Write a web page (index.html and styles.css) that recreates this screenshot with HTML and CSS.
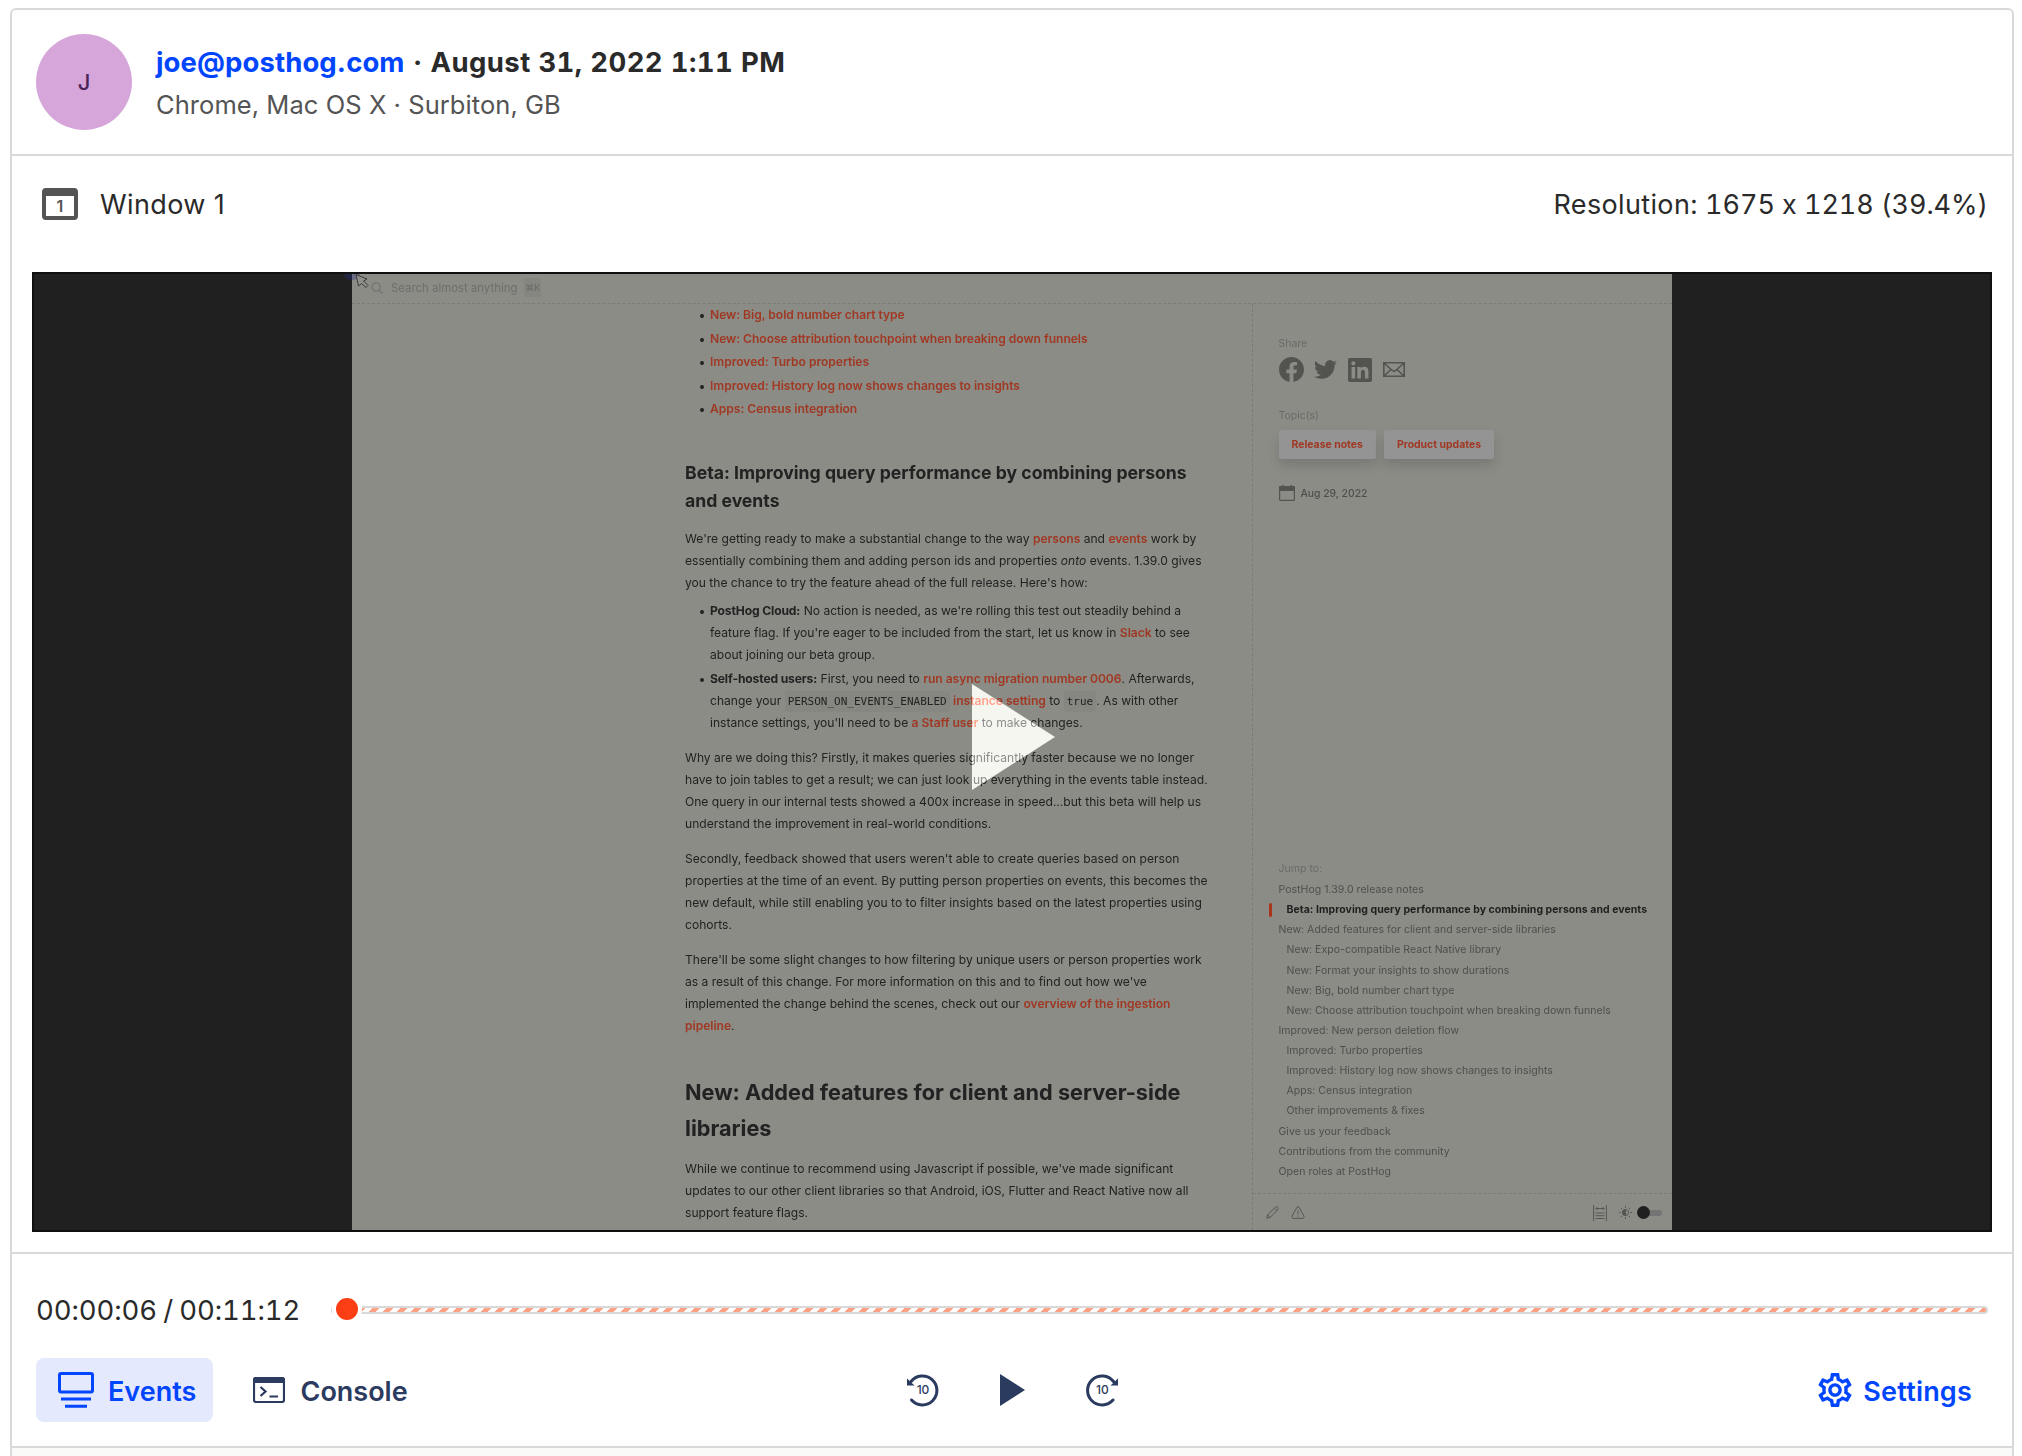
FILE: index.html
```
<!DOCTYPE html>
<html lang="en">
<head>
<meta charset="utf-8">
<title>Session recording</title>
<link rel="stylesheet" href="styles.css">
</head>
<body>
<main class="player">
  <header class="meta">
    <div class="avatar">J</div>
    <div class="meta-text">
      <div class="meta-title"><a class="email">joe@posthog.com</a><span class="sep">·</span><span class="date">August 31, 2022 1:11 PM</span></div>
      <div class="meta-sub">Chrome, Mac OS X · Surbiton, GB</div>
    </div>
  </header>

  <section class="stage">
    <div class="window-bar">
      <span class="window-icon">1</span>
      <span class="window-name">Window 1</span>
      <span class="resolution"><span class="res-label">Resolution:</span> 1675 x 1218 (39.4%)</span>
    </div>

    <div class="frame">
      <div class="page">
        <div class="search">
          <svg class="search-icon" viewBox="0 0 12 12"><circle cx="5" cy="5" r="4.1"/><path d="M8 8l3.5 3.5"/></svg>
          <span class="search-text">Search almost anything</span>
          <span class="kbd">⌘K</span>
        </div>
        <div class="columns">
          <article class="article">
            <ul class="links">
              <li><a>New: Big, bold number chart type</a></li>
              <li><a>New: Choose attribution touchpoint when breaking down funnels</a></li>
              <li><a>Improved: Turbo properties</a></li>
              <li><a>Improved: History log now shows changes to insights</a></li>
              <li><a>Apps: Census integration</a></li>
            </ul>
            <h3>Beta: Improving query performance by combining persons<br>and events</h3>
            <p>We're getting ready to make a substantial change to the way <a>persons</a> and <a>events</a> work by<br>essentially combining them and adding person ids and properties <em>onto</em> events. 1.39.0 gives<br>you the chance to try the feature ahead of the full release. Here's how:</p>
            <ul class="steps">
              <li><b>PostHog Cloud:</b> No action is needed, as we're rolling this test out steadily behind a<br>feature flag. If you're eager to be included from the start, let us know in <a>Slack</a> to see<br>about joining our beta group.</li>
              <li><b>Self-hosted users:</b> First, you need to <a>run async migration number 0006</a>. Afterwards,<br>change your <code>PERSON_ON_EVENTS_ENABLED</code> <a>instance setting</a> to <code>true</code>. As with other<br>instance settings, you'll need to be <a>a Staff user</a> to make changes.</li>
            </ul>
            <p>Why are we doing this? Firstly, it makes queries significantly faster because we no longer<br>have to join tables to get a result; we can just look up everything in the events table instead.<br>One query in our internal tests showed a 400x increase in speed...but this beta will help us<br>understand the improvement in real-world conditions.</p>
            <p>Secondly, feedback showed that users weren't able to create queries based on person<br>properties at the time of an event. By putting person properties on events, this becomes the<br>new default, while still enabling you to to filter insights based on the latest properties using<br>cohorts.</p>
            <p>There'll be some slight changes to how filtering by unique users or person properties work<br>as a result of this change. For more information on this and to find out how we've<br>implemented the change behind the scenes, check out our <a>overview of the ingestion<br>pipeline</a>.</p>
            <h2>New: Added features for client and server-side<br>libraries</h2>
            <p>While we continue to recommend using Javascript if possible, we've made significant<br>updates to our other client libraries so that Android, iOS, Flutter and React Native now all<br>support feature flags.</p>
          </article>

          <aside class="sidebar">
            <div class="label">Share</div>
            <div class="share">
              <svg class="fb" viewBox="0 0 24 24"><path d="M24 12.073c0-6.627-5.373-12-12-12s-12 5.373-12 12c0 5.99 4.388 10.954 10.125 11.854v-8.385H7.078v-3.47h3.047V9.43c0-3.007 1.792-4.669 4.533-4.669 1.312 0 2.686.235 2.686.235v2.953H15.83c-1.491 0-1.956.925-1.956 1.874v2.25h3.328l-.532 3.47h-2.796v8.385C19.612 23.027 24 18.062 24 12.073z"/></svg>
              <svg class="tw" viewBox="0 0 24 24"><path d="M23.953 4.57a10 10 0 01-2.825.775 4.958 4.958 0 002.163-2.723c-.951.555-2.005.959-3.127 1.184a4.92 4.92 0 00-8.384 4.482C7.69 8.095 4.067 6.13 1.64 3.162a4.822 4.822 0 00-.666 2.475c0 1.71.87 3.213 2.188 4.096a4.904 4.904 0 01-2.228-.616v.06a4.923 4.923 0 003.946 4.827 4.996 4.996 0 01-2.212.085 4.936 4.936 0 004.604 3.417 9.867 9.867 0 01-6.102 2.105c-.39 0-.779-.023-1.17-.067a13.995 13.995 0 007.557 2.209c9.053 0 13.998-7.496 13.998-13.985 0-.21 0-.42-.015-.63A9.935 9.935 0 0024 4.59z"/></svg>
              <svg class="li" viewBox="0 0 24 24"><path d="M20.447 20.452h-3.554v-5.569c0-1.328-.027-3.037-1.852-3.037-1.853 0-2.136 1.445-2.136 2.939v5.667H9.351V9h3.414v1.561h.046c.477-.9 1.637-1.85 3.37-1.85 3.601 0 4.267 2.37 4.267 5.455v6.286zM5.337 7.433a2.062 2.062 0 01-2.063-2.065 2.064 2.064 0 112.063 2.065zm1.782 13.019H3.555V9h3.564v11.452zM22.225 0H1.771C.792 0 0 .774 0 1.729v20.542C0 23.227.792 24 1.771 24h20.451C23.2 24 24 23.227 24 22.271V1.729C24 .774 23.2 0 22.222 0h.003z"/></svg>
              <svg class="mail" viewBox="0 0 22 15"><path d="M.8.8h20.4v13.4H.8zM1 1l8.300 7.500q1.700 1.400 3.400 0L21 1M1 14l7-6.500M21 14l-7-6.500"/></svg>
            </div>
            <div class="label topics">Topic(s)</div>
            <div class="tags"><a class="tag">Release notes</a><a class="tag">Product updates</a></div>
            <div class="pubdate">
              <svg viewBox="0 0 16 16"><path class="fill" d="M0 2q0-1 1-1h2V0h1.500v1h7V0H13v1h2q1 0 1 1v4H0z"/><path class="line" d="M.6 4v10.400q0 1 1 1h12.800q1 0 1-1V4"/></svg>
              <span>Aug 29, 2022</span>
            </div>
            <nav class="toc">
              <div class="label">Jump to:</div>
              <a>PostHog 1.39.0 release notes</a>
              <a class="sub current">Beta: Improving query performance by combining persons and events</a>
              <a>New: Added features for client and server-side libraries</a>
              <a class="sub">New: Expo-compatible React Native library</a>
              <a class="sub">New: Format your insights to show durations</a>
              <a class="sub">New: Big, bold number chart type</a>
              <a class="sub">New: Choose attribution touchpoint when breaking down funnels</a>
              <a>Improved: New person deletion flow</a>
              <a class="sub">Improved: Turbo properties</a>
              <a class="sub">Improved: History log now shows changes to insights</a>
              <a class="sub">Apps: Census integration</a>
              <a class="sub">Other improvements &amp; fixes</a>
              <a>Give us your feedback</a>
              <a>Contributions from the community</a>
              <a>Open roles at PostHog</a>
            </nav>
            <div class="tools">
              <svg class="pencil" viewBox="0 0 13 13"><path d="M.8 12.200l.8-3.300L9.500 1q1-.8 1.900 0l.6.600q.8 1 0 1.900L4.100 11.400zM8.400 2.200l2.400 2.400M1.800 9l2.200 2.200"/></svg>
              <svg class="warn" viewBox="0 0 14 13"><path d="M6 1.200q1-1.200 2 0l5 9q.5 1.500-1 2.200H2Q.5 11.700 1 10.200zM7 4.500v4M7 9.700v1"/></svg>
              <svg class="width" viewBox="0 0 14 16"><path d="M.6 0v16M13.400 0v16M3 3.500h8M4.500 2L3 3.500 4.500 5M9.500 2L11 3.500 9.500 5M2.500 8h9M2.500 10.700h9M2.500 13.500h9"/></svg>
              <svg class="sun" viewBox="0 0 13 13"><circle cx="6.500" cy="6.500" r="3"/><path class="half" d="M6.500 3.500a3 3 0 000 6z"/><path d="M6.500 0v1.700M6.500 11.300V13M0 6.500h1.700M11.300 6.500H13M1.900 1.900l1.200 1.200M9.900 9.900l1.200 1.200M1.900 11.100l1.200-1.200M9.900 3.100l1.200-1.200"/></svg>
              <span class="switch"></span>
            </div>
          </aside>
        </div>
      </div>
      <svg class="cursor" viewBox="0 0 28 18"><path class="halo" d="M0 0h16a8 6 0 01-16 0z"/><path class="arrow" d="M12 .5l2.500 11.500 3-2.500 4.500 4 2-2-4.500-4.500 3.500-2z"/></svg>
      <svg class="big-play" viewBox="0 0 83 106"><path d="M0 0l83 53L0 106z"/></svg>
    </div>
  </section>

  <section class="controls">
    <div class="timeline">
      <span class="time">00:00:06 / 00:11:12</span>
      <div class="track"><span class="handle"></span></div>
    </div>
    <div class="buttons">
      <div class="group">
        <a class="btn active">
          <svg class="ev" viewBox="0 0 36 36"><rect x="1.500" y="1.500" width="33" height="18.500" rx="1.500"/><path d="M3 27h30M7 34.300h22"/></svg>
          <span>Events</span>
        </a>
        <a class="btn console">
          <svg class="con" viewBox="0 0 32 26"><rect x="1" y="1" width="30" height="24" rx="2"/><path class="fill" d="M0 6V3q0-3 3-3h26q3 0 3 3v3z"/><path d="M7.500 10l5 4.500-5 4.500M16.500 19.500h8.500"/></svg>
          <span>Console</span>
        </a>
      </div>
      <div class="group playback">
        <svg class="seek" viewBox="0 0 32 34"><path class="arc" d="M4 8.500A14.500 14.500 0 1 1 4.500 27"/><path class="tip" d="M0 5.500V12.500h7.500z"/><text x="16" y="21.400">10</text></svg>
        <svg class="play" viewBox="0 0 25 32"><path d="M0 0l25 16L0 32z"/></svg>
        <svg class="seek" viewBox="0 0 32 34"><path class="arc" d="M27.500 8.500A14.500 14.500 0 1 0 27 27"/><path class="tip" d="M32 5.500V12.500h-7.500z"/><text x="16.300" y="21.400">10</text></svg>
      </div>
      <a class="settings">
        <svg class="gear" viewBox="2 2 20 20"><path d="M19.430 12.980c.04-.32.07-.64.07-.98 0-.34-.03-.66-.07-.98l2.110-1.650c.19-.15.24-.42.12-.64l-2-3.460c-.09-.16-.26-.25-.44-.25-.06 0-.12.01-.17.03l-2.490 1c-.52-.4-1.080-.73-1.690-.98l-.38-2.650C14.460 2.180 14.250 2 14 2h-4c-.25 0-.46.18-.49.42l-.38 2.650c-.61.25-1.170.59-1.690.98l-2.490-1c-.06-.02-.12-.03-.18-.03-.17 0-.34.09-.43.25l-2 3.460c-.13.22-.07.49.12.64l2.110 1.650c-.04.32-.07.65-.07.98 0 .33.03.66.07.98l-2.110 1.650c-.19.15-.24.42-.12.64l2 3.460c.09.16.26.25.44.25.06 0 .12-.01.17-.03l2.490-1c.52.4 1.080.73 1.690.98l.38 2.650c.03.24.24.42.49.42h4c.25 0 .46-.18.49-.42l.38-2.650c.61-.25 1.170-.59 1.690-.98l2.490 1c.06.02.12.03.18.03.17 0 .34-.09.43-.25l2-3.460c.12-.22.07-.49-.12-.64l-2.110-1.650zm-1.980-1.710c.04.31.05.52.05.73 0 .21-.02.43-.05.73l-.14 1.130.89.7 1.080.84-.7 1.210-1.270-.51-1.040-.42-.9.68c-.43.32-.84.56-1.250.73l-1.060.43-.16 1.130-.2 1.350h-1.400l-.19-1.350-.16-1.130-1.060-.43c-.43-.18-.83-.41-1.230-.71l-.91-.7-1.060.43-1.270.51-.7-1.210 1.080-.84.89-.7-.14-1.130c-.03-.31-.05-.54-.05-.74s.02-.43.05-.73l.14-1.130-.89-.7-1.080-.84.7-1.210 1.270.51 1.040.42.9-.68c.43-.32.84-.56 1.250-.73l1.060-.43.16-1.130.2-1.350h1.390l.19 1.350.16 1.130 1.060.43c.43.18.83.41 1.230.71l.91.7 1.060-.43 1.270-.51.7 1.210-1.070.85-.89.7.14 1.130zM12 8c-2.210 0-4 1.790-4 4s1.790 4 4 4 4-1.790 4-4-1.790-4-4-4zm0 6c-1.100 0-2-.9-2-2s.9-2 2-2 2 .9 2 2-.9 2-2 2z"/></svg>
        <span>Settings</span>
      </a>
    </div>
  </section>
  <div class="below"></div>
</main>
</body>
</html>
```
FILE: styles.css
```
* { box-sizing: border-box; }

body {
  margin: 0;
  height: 1456px;
  overflow: hidden;
  background: #fff;
  color: #2a2a2a;
  font-family: "Inter", "Liberation Sans", sans-serif;
}

svg { display: block; flex: none; }

.player {
  margin: 8px 8px 0 10px;
  height: 1448px;
  border: 2px solid #d9d9d9;
  border-bottom: 0;
  border-radius: 6px 6px 0 0;
  white-space: nowrap;
}

/* Person and session details */
.meta {
  display: flex;
  align-items: center;
  gap: 24px;
  height: 146px;
  padding: 0 24px;
  border-bottom: 2px solid #d9d9d9;
}
.avatar {
  display: grid;
  place-items: center;
  width: 96px;
  height: 96px;
  border-radius: 50%;
  background: #d6a6db;
  color: #4d2457;
  font-size: 22px;
  font-weight: 500;
}
.meta-text { padding-top: 1px; }
.meta-title {
  display: flex;
  height: 44px;
  align-items: center;
  font-size: 27.500px;
  font-weight: 700;
}
.email { color: #0145ff; letter-spacing: .1px; }
.sep { width: 26px; text-align: center; }
.date { font-variant-numeric: tabular-nums; letter-spacing: .4px; }
.meta-sub {
  height: 42px;
  line-height: 42px;
  color: #545454;
  font-size: 25.500px;
  letter-spacing: .06px;
}

/* Recording */
.window-bar {
  display: flex;
  align-items: center;
  height: 116px;
  padding: 0 24px 20px 30px;
  font-size: 27px;
}
.window-icon {
  display: grid;
  place-items: center;
  width: 36px;
  height: 32px;
  margin-right: 22px;
  border: 4px solid #545454;
  border-top-width: 8px;
  border-radius: 4px;
  color: #545454;
  font-size: 16px;
  font-weight: 600;
  line-height: 16px;
}
.window-name { letter-spacing: .4px; }
.resolution {
  margin-left: auto;
  font-feature-settings: "calt" 0, "tnum" 1;
  letter-spacing: -.05px;
}
.res-label { letter-spacing: .35px; }
.frame {
  position: relative;
  isolation: isolate;
  display: flex;
  justify-content: center;
  width: 1960px;
  height: 960px;
  margin-left: 20px;
  overflow: hidden;
  border: 2px solid #101010;
  background: #202020;
}
.page {
  width: 1320px;
  height: 956px;
  background: #8b8c86;
  color: #222;
}
.search {
  display: flex;
  align-items: center;
  height: 30px;
  padding: 0 0 2px 19px;
  border-bottom: 1px dashed #7b7c77;
  color: #6e6f6a;
  font-size: 11.400px;
}
.search-icon {
  width: 12px;
  height: 12px;
  margin-right: 8px;
  fill: none;
  stroke: #747570;
  stroke-width: 1.400;
}
.kbd {
  display: grid;
  place-items: center;
  width: 17px;
  height: 19px;
  margin-left: 7px;
  border-radius: 2px;
  background: #858680;
  color: #6a6b67;
  font-size: 9px;
}
.columns { display: flex; height: 926px; }

.article {
  flex: 1;
  padding-left: 333px;
  font-size: 12.080px;
  line-height: 22px;
}
.article ul { margin: 0; padding: 0; list-style: none; }
.article li { position: relative; padding-left: 25px; }
.article li::before {
  content: "";
  position: absolute;
  left: 15px;
  top: 10px;
  width: 4px;
  height: 4px;
  border-radius: 50%;
  background: #222;
}
.article a { color: #a03823; font-weight: 600; letter-spacing: -.02px; }
.links li { height: 23.500px; line-height: 21.500px; }
.article h3 {
  margin: 37px 0 13px;
  font-size: 17.620px;
  line-height: 28px;
  font-weight: 700;
}
.article p { margin: 0 0 13px; }
.article h3 + p { margin-bottom: 6px; }
.steps li { margin-bottom: 2px; }
.steps li:last-child { margin-bottom: 13px; }
.article b { font-weight: 700; letter-spacing: -.13px; }
.article code {
  padding: 4px 3px;
  border-radius: 3px;
  background: #868781;
  font-family: "DejaVu Sans Mono", monospace;
  font-size: 11px;
  line-height: 1;
}
.article h2 {
  margin: 37px 0 12px;
  font-size: 21.700px;
  line-height: 36px;
  font-weight: 700;
}

.sidebar {
  display: flex;
  flex-direction: column;
  width: 420px;
  padding: 30px 0 0 25.500px;
  border-left: 1px dashed #7b7c77;
  color: #4e4f4b;
  font-size: 10.500px;
}
.label { height: 20px; line-height: 20px; color: #6a6b67; }
.share {
  display: flex;
  align-items: center;
  height: 31px;
  fill: #535450;
}
.fb { width: 25px; }
.tw { width: 23px; margin-left: 10px; }
.li { width: 24px; margin-left: 11px; }
.mail {
  width: 22px;
  margin-left: 11px;
  fill: none;
  stroke: #535450;
  stroke-width: 1.600;
}
.topics { margin-top: 21px; }
.tags { display: flex; gap: 8px; margin-top: 4px; }
.tag {
  height: 29px;
  padding: 0 13px;
  border-radius: 2px;
  background: #949494;
  box-shadow: 0 7px 12px rgba(0, 0, 0, .13);
  color: #a03823;
  font-size: 10.450px;
  font-weight: 700;
  line-height: 29px;
}
.pubdate {
  display: flex;
  align-items: center;
  gap: 6px;
  height: 20px;
  margin-top: 24px;
  font-size: 10.350px;
  font-weight: 500;
}
.pubdate svg { width: 16px; height: 16px; }
.pubdate .fill { fill: #535450; }
.pubdate .line { fill: none; stroke: #535450; stroke-width: 1.200; }
.toc {
  display: flex;
  flex-direction: column;
  margin-top: 356px;
  letter-spacing: .04px;
}
.toc .label { height: 21px; }
.toc a { height: 20.130px; line-height: 20px; }
.toc .sub { padding-left: 8px; }
.toc .current {
  position: relative;
  color: #1f1f1f;
  font-weight: 700;
}
.toc .current::before {
  content: "";
  position: absolute;
  left: -9.500px;
  top: 3px;
  width: 3px;
  height: 14px;
  border-radius: 2px;
  background: #a8341c;
}
.tools {
  display: flex;
  align-items: center;
  height: 37px;
  margin: auto 0 0 -25.500px;
  padding: 1px 10px 0 13px;
  border-top: 1px dashed #7b7c77;
  fill: none;
  stroke: #555652;
  stroke-width: 1;
}
.pencil { width: 13px; }
.warn { width: 14px; margin-left: 12px; }
.width { width: 14px; margin-left: auto; }
.sun { width: 13px; margin-left: 12px; }
.half { fill: #555652; }
.switch {
  position: relative;
  width: 24px;
  height: 6px;
  margin-left: 6px;
  border-radius: 3px;
  background: #747474;
}
.switch::before {
  content: "";
  position: absolute;
  left: -1px;
  top: -4px;
  width: 13px;
  height: 13px;
  border-radius: 50%;
  background: #202020;
}

.cursor {
  position: absolute;
  left: 310px;
  top: 0;
  width: 28px;
  height: 18px;
}
.halo { fill: rgba(40, 50, 130, .35); }
.arrow { fill: #8f908b; stroke: #3a3a3a; stroke-width: 1; }
/* The overlay button lightens the page instead of hiding it */
.big-play {
  position: absolute;
  left: 938px;
  top: 410px;
  width: 83px;
  height: 106px;
  fill: #6a6a6a;
  mix-blend-mode: plus-lighter;
}

/* Playback controls */
.controls {
  height: 196px;
  margin-top: 20px;
  padding: 0 24px;
  border-top: 2px solid #d9d9d9;
  border-bottom: 2px solid #d9d9d9;
}
.timeline {
  display: flex;
  align-items: center;
  height: 104px;
  padding-top: 8px;
}
.time {
  width: 295px;
  font-size: 27.500px;
  font-variant-numeric: tabular-nums;
  letter-spacing: -.1px;
  word-spacing: -1px;
}
.track {
  position: relative;
  width: 1657px;
  height: 8px;
  border: 2px solid #d9d9d9;
  border-radius: 4px;
  background: repeating-linear-gradient(-45deg, #ffa283 0 5px, #fff 5px 9.900px);
}
.handle {
  position: absolute;
  left: -1px;
  top: -14px;
  width: 30px;
  height: 30px;
  border: 4px solid #fff;
  border-radius: 50%;
  background: #fc3e14;
}
.buttons {
  display: grid;
  grid-template-columns: 1fr auto 1fr;
  align-items: center;
  height: 64px;
  font-size: 27px;
  font-weight: 600;
}
.buttons span { padding-top: 2px; }
.group { display: flex; align-items: center; }
.btn, .settings { display: flex; align-items: center; }
.btn {
  height: 64px;
  padding: 0 0 0 22px;
  border-radius: 8px;
  color: #2b3a5f;
}
.btn.active { width: 177px; background: #e4e9fd; color: #0145ff; }
.btn.console { margin-left: 18px; }
.ev, .con { fill: none; stroke: currentColor; stroke-width: 3; }
.ev { width: 36px; height: 36px; margin-right: 14px; }
.con { width: 32px; height: 26px; margin-right: 15.500px; stroke-width: 2.200; }
.con .fill { fill: currentColor; stroke: none; }
.playback { fill: #2b3a5f; }
.seek { width: 32px; height: 34px; }
.seek .arc {
  fill: none;
  stroke: #2b3a5f;
  stroke-width: 3;
  stroke-linecap: round;
}
.seek text {
  font-size: 12px;
  font-weight: 500;
  text-anchor: middle;
}
.play { width: 25px; height: 32px; margin: 0 61px; }
.settings { justify-self: end; padding-right: 16px; color: #0145ff; }
.gear { width: 34px; height: 34px; margin-right: 11px; fill: currentColor; }
.buttons .settings span { letter-spacing: .2px; }

.below { height: 10px; background: #f9f9f8; }
```
